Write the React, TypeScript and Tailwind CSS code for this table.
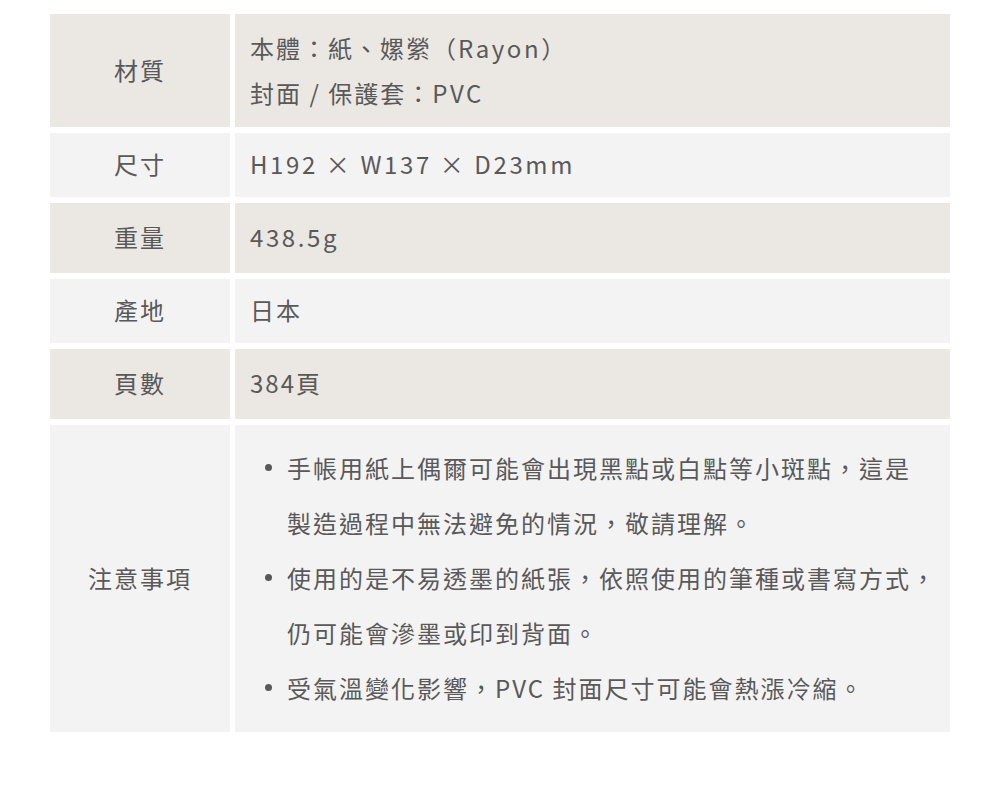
const font = {
  fontFamily: '"Noto Sans CJK TC", "Noto Sans", sans-serif',
};

type Row = {
  label: string;
  h: string;
  bg: string;
  body: React.ReactNode;
};

const notes: string[][] = [
  ["手帳用紙上偶爾可能會出現黑點或白點等小斑點，這是", "製造過程中無法避免的情況，敬請理解。"],
  ["使用的是不易透墨的紙張，依照使用的筆種或書寫方式，", "仍可能會滲墨或印到背面。"],
  ["受氣溫變化影響，PVC 封面尺寸可能會熱漲冷縮。"],
];

// latin runs come out a bit narrow in the CJK face, widen them a touch
const Lat = ({ children }: { children: React.ReactNode }) => (
  <span className="tracking-[2.6px]">{children}</span>
);

const rows: Row[] = [
  {
    label: "材質",
    h: "h-[113px]",
    bg: "bg-[#ebe8e4]",
    body: (
      <div className="leading-[45px]">
        <div>
          本體：紙、嫘縈（<Lat>Rayon</Lat>）
        </div>
        <div>
          封面 / 保護套：<Lat>PVC</Lat>
        </div>
      </div>
    ),
  },
  { label: "尺寸", h: "h-[64px]", bg: "bg-[#f4f3f4]", body: <Lat>H192 × W137 × D23mm</Lat> },
  { label: "重量", h: "h-[70px]", bg: "bg-[#ebe8e4]", body: <Lat>438.5g</Lat> },
  { label: "產地", h: "h-[64px]", bg: "bg-[#f4f3f4]", body: "日本" },
  { label: "頁數", h: "h-[70px]", bg: "bg-[#ebe8e4]", body: "384頁" },
  {
    label: "注意事項",
    h: "h-[307px]",
    bg: "bg-[#f4f3f4]",
    body: (
      <ul className="leading-[55px]">
        {notes.map((lines, i) => (
          <li key={i} className="flex">
            <span className="flex h-[55px] w-[37px] shrink-0 items-center justify-center">
              <span className="h-[7px] w-[7px] rounded-full bg-[#595959]" />
            </span>
            <div className="whitespace-nowrap">
              {lines.map((l, j) => (
                <div key={j}>{l}</div>
              ))}
            </div>
          </li>
        ))}
      </ul>
    ),
  },
];

export default function App() {
  return (
    <div className="min-h-screen bg-white pt-[14px] pl-[50px]" style={font}>
      <div className="flex w-[900px] flex-col gap-[6px] text-[24px] tracking-[2px] text-[#595959]">
        {rows.map(r => (
          <div key={r.label} className={`flex gap-[5px] ${r.h}`}>
            <div className={`flex w-[180px] shrink-0 items-center justify-center pb-[2px] ${r.bg}`}>
              {r.label}
            </div>
            <div className={`flex flex-1 items-center pb-[2px] pl-[15px] ${r.bg}`}>{r.body}</div>
          </div>
        ))}
      </div>
    </div>
  );
}
